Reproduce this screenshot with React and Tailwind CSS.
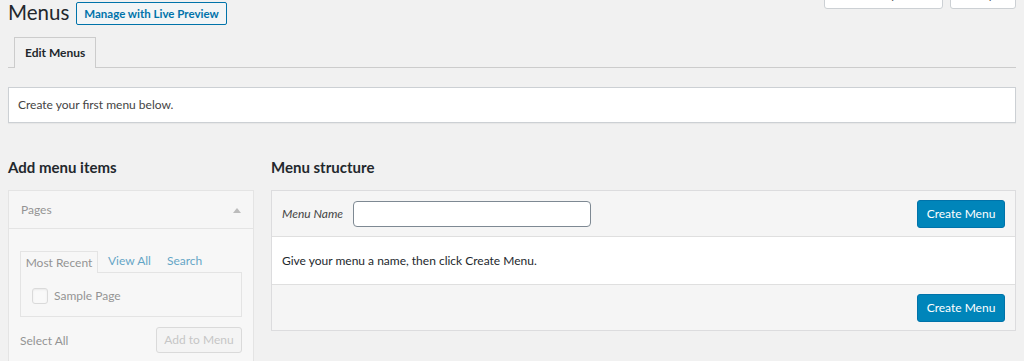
export default function App() {
  return (
    <div className="min-h-[361px] bg-[#f1f1f1] text-[12px] text-[#23282d] overflow-hidden" style={{ fontFamily: 'Lato, "Open Sans", Arial, sans-serif' }}>
      <div className="pl-2 pr-2">
        {/* Title row */}
        <div className="flex items-start h-[29px]">
          <h1 className="text-[20.5px] leading-[29px] font-normal text-[#23282d] mt-[-2px]">Menus</h1>
          <button className="ml-[7px] mt-[2px] h-[23px] px-[7px] border border-[#0073aa] bg-[#f3f5f6] text-[#0073aa] font-bold text-[11.5px] leading-[21px] rounded-[2px]">
            Manage with Live Preview
          </button>
          <div className="ml-auto flex gap-[7px] mt-[-19px]">
            <button className="w-[119px] h-[28px] bg-white border border-[#ccd0d4] rounded-b-[3px] text-[#555] text-[12px]">Screen Options</button>
            <button className="w-[66px] h-[28px] bg-white border border-[#ccd0d4] rounded-b-[3px] text-[#555] text-[12px]">Help</button>
          </div>
        </div>

        {/* Tabs */}
        <div className="mt-[8px] border-b border-[#ccc] pl-[6px] flex">
          <div className="h-[31px] px-[10px] border border-b-0 border-[#ccc] bg-[#f1f1f1] font-bold text-[12px] leading-[30px] mb-[-1px] text-[#23282d]">
            Edit Menus
          </div>
        </div>

        {/* Notice */}
        <div className="mt-[19px] bg-white border border-[#ccd0d4] shadow-[0_1px_1px_rgba(0,0,0,0.04)] h-[36px] px-[9px] flex items-center text-[#444]">
          Create your first menu below.
        </div>

        {/* Columns */}
        <div className="mt-[34px] flex gap-[17px] items-start">
          {/* Left */}
          <div className="w-[246px] shrink-0">
            <h2 className="text-[15px] font-bold leading-[20px] text-[#23282d] mb-[13px]">Add menu items</h2>
            <div className="border border-[#ddd] bg-[#f5f5f5] opacity-60">
              <div className="h-[38px] flex items-center justify-between pl-[12px] pr-[12px] border-b border-[#ddd] bg-[#fafafa]">
                <span className="text-[#555]">Pages</span>
                <svg width="8" height="6" viewBox="0 0 8 6"><path d="M0 6 L4 1 L8 6 Z" fill="#999" /></svg>
              </div>
              <div className="bg-[#fbfbfb] px-[11px] pt-[21px] pb-4">
                <div className="flex items-end">
                  <div className="w-[78px] h-[22px] border border-b-0 border-[#ddd] bg-[#fbfbfb] text-[#555] leading-[21px] text-center relative z-10 mb-[-1px]">Most Recent</div>
                  <span className="ml-[10px] text-[#0073aa] leading-[22px]">View All</span>
                  <span className="ml-[16px] text-[#0073aa] leading-[22px]">Search</span>
                </div>
                <div className="h-[45px] border border-[#ddd] bg-[#fbfbfb] flex items-center pl-[11px] pt-[2px]">
                  <span className="w-[16px] h-[16px] border border-[#ccc] rounded-[3px] bg-white shadow-[inset_0_1px_2px_rgba(0,0,0,0.1)]" />
                  <span className="ml-[6px] text-[#555]">Sample Page</span>
                </div>
                <div className="flex items-center justify-between mt-[10px]">
                  <span className="text-[#555] pt-[2px]">Select All</span>
                  <button className="w-[86px] h-[26px] border border-[#ccc] bg-[#f7f7f7] text-[#aaa] rounded-[3px]">Add to Menu</button>
                </div>
              </div>
            </div>
          </div>

          {/* Right */}
          <div className="flex-1">
            <h2 className="text-[15px] font-bold leading-[20px] text-[#23282d] mb-[13px]">Menu structure</h2>
            <div className="border border-[#dcdcde] bg-white">
              <div className="h-[46px] bg-[#f5f5f5] border-b border-[#dfdfdf] flex items-center px-[10px]">
                <span className="italic text-[#444]">Menu Name</span>
                <input className="ml-[10px] w-[238px] h-[26px] border border-[#7e8993] rounded-[4px] bg-white" />
                <button className="ml-auto w-[88px] h-[28px] bg-[#0085ba] border border-[#0073aa] rounded-[3px] text-white text-[12px]">Create Menu</button>
              </div>
              <div className="h-[47px] bg-white flex items-center px-[10px] text-[#23282d]">
                Give your menu a name, then click Create Menu.
              </div>
              <div className="h-[46px] bg-[#f5f5f5] border-t border-[#dfdfdf] flex items-center justify-end px-[10px]">
                <button className="w-[88px] h-[28px] bg-[#0085ba] border border-[#0073aa] rounded-[3px] text-white text-[12px]">Create Menu</button>
              </div>
            </div>
          </div>
        </div>
      </div>
    </div>
  );
}
